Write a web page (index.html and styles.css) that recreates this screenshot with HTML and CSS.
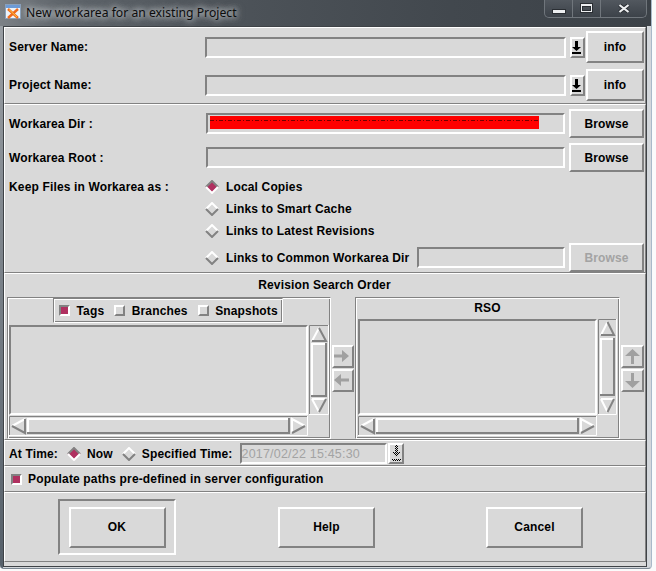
FILE: index.html
```html
<!DOCTYPE html>
<html>
<head>
<meta charset="utf-8">
<title>New workarea for an existing Project</title>
<link rel="stylesheet" href="styles.css">
</head>
<body>
<div class="win">
  <div class="titlebar">
    <svg class="appicon" width="16" height="16" viewBox="0 0 16 16">
      <rect x="0.5" y="0.5" width="15" height="14" fill="#eef3f8" stroke="#8aa0bb"/>
      <rect x="1" y="1" width="14" height="3" fill="#6d9bd6"/>
      <path d="M3 5 13 14M13 5 3 14" stroke="#f06a1c" stroke-width="2.5"/>
      <path d="M4 5.5 12 13" stroke="#ffc43a" stroke-width="1"/>
    </svg>
    <span class="title">New workarea for an existing Project</span>
    <div class="capbtns">
      <div class="cap cap-min"><span class="g-min"></span></div>
      <div class="cap cap-max"><span class="g-max"></span></div>
      <div class="cap cap-close">
        <svg class="g-close" width="12" height="9" viewBox="0 0 12 9">
          <path d="M1.5 1 10.5 8M10.5 1 1.5 8" stroke="#2a2e33" stroke-width="4"/>
          <path d="M1.5 1 10.5 8M10.5 1 1.5 8" stroke="#eceef0" stroke-width="2.2"/>
        </svg>
      </div>
    </div>
  </div>

  <div class="client">
    <!-- Section 1 -->
    <div class="sec s1">
      <div class="row">
        <span class="lbl">Server Name:</span>
        <div class="entry"></div>
        <div class="btn dd">
          <svg width="11" height="17" viewBox="0 0 11 17"><path d="M3 2H6V8H9L4.5 12 0 8H3ZM0 13H9V15H0Z" fill="#000"/></svg>
        </div>
        <div class="btn info">info</div>
      </div>
      <div class="row">
        <span class="lbl">Project Name:</span>
        <div class="entry"></div>
        <div class="btn dd">
          <svg width="11" height="17" viewBox="0 0 11 17"><path d="M3 2H6V8H9L4.5 12 0 8H3ZM0 13H9V15H0Z" fill="#000"/></svg>
        </div>
        <div class="btn info">info</div>
      </div>
    </div>

    <!-- Section 2 -->
    <div class="sec s2">
      <div class="row">
        <span class="lbl">Workarea Dir :</span>
        <div class="entry"><div class="redact"></div></div>
        <div class="btn browse">Browse</div>
      </div>
      <div class="row">
        <span class="lbl">Workarea Root :</span>
        <div class="entry"></div>
        <div class="btn browse">Browse</div>
      </div>
      <div class="keep">
        <span class="lbl">Keep Files in Workarea as :</span>
        <div class="radios">
          <div class="ritem">
            <svg class="dia" viewBox="0 0 14 14"><path d="M7 0.5 13.5 7 7 13.5 0.5 7Z" fill="#b03060"/><path d="M1 7 7 1 13 7" fill="none" stroke="#828282" stroke-width="2"/><path d="M1 7 7 13 13 7" fill="none" stroke="#fff" stroke-width="2"/></svg>
            <span>Local Copies</span>
          </div>
          <div class="ritem">
            <svg class="dia" viewBox="0 0 14 14"><path d="M7 0.5 13.5 7 7 13.5 0.5 7Z" fill="#d9d9d9"/><path d="M1 7 7 1 13 7" fill="none" stroke="#fff" stroke-width="2"/><path d="M1 7 7 13 13 7" fill="none" stroke="#828282" stroke-width="2"/></svg>
            <span>Links to Smart Cache</span>
          </div>
          <div class="ritem">
            <svg class="dia" viewBox="0 0 14 14"><path d="M7 0.5 13.5 7 7 13.5 0.5 7Z" fill="#d9d9d9"/><path d="M1 7 7 1 13 7" fill="none" stroke="#fff" stroke-width="2"/><path d="M1 7 7 13 13 7" fill="none" stroke="#828282" stroke-width="2"/></svg>
            <span>Links to Latest Revisions</span>
          </div>
          <div class="ritem last">
            <svg class="dia" viewBox="0 0 14 14"><path d="M7 0.5 13.5 7 7 13.5 0.5 7Z" fill="#d9d9d9"/><path d="M1 7 7 1 13 7" fill="none" stroke="#fff" stroke-width="2"/><path d="M1 7 7 13 13 7" fill="none" stroke="#828282" stroke-width="2"/></svg>
            <span>Links to Common Workarea Dir</span>
            <div class="entry common"></div>
            <div class="btn browse disabled">Browse</div>
          </div>
        </div>
      </div>
    </div>

    <!-- Section 3 -->
    <div class="sec s3">
      <div class="stitle">Revision Search Order</div>
      <div class="rso">
        <div class="grp lf">
          <div class="grp chkgrp">
            <span class="chk on"></span><span class="ctext">Tags</span>
            <span class="chk off sp"></span><span class="ctext">Branches</span>
            <span class="chk off sp"></span><span class="ctext">Snapshots</span>
          </div>
          <div class="listrow">
            <div class="list list1"></div>
            <svg class="sb vsb" width="20" height="90" viewBox="0 0 20 90">
              <path d="M0.5 90V0.5H20" fill="none" stroke="#828282"/>
              <path d="M0 89.5H19.5V0" fill="none" stroke="#fff"/>
              <path d="M3 16 10 3" stroke="#fff" stroke-width="2"/>
              <path d="M10 3 17 16H3" fill="none" stroke="#828282" stroke-width="2"/>
              <path d="M2 19H18M3 18V72" stroke="#fff" stroke-width="2"/>
              <path d="M2 71H18M17 18V72" stroke="#828282" stroke-width="2"/>
              <path d="M3 74H17M3 74 10 87" fill="none" stroke="#fff" stroke-width="2"/>
              <path d="M10 87 17 74" stroke="#828282" stroke-width="2"/>
            </svg>
          </div>
          <svg class="sb hsb" width="299" height="20" viewBox="0 0 299 20">
            <path d="M0.5 20V0.5H299" fill="none" stroke="#828282"/>
            <path d="M0 19.5H298.5V0" fill="none" stroke="#fff"/>
            <path d="M3 10 16 3" stroke="#fff" stroke-width="2"/>
            <path d="M16 3V17L3 10" fill="none" stroke="#828282" stroke-width="2"/>
            <path d="M18 3H281M19 2V18" stroke="#fff" stroke-width="2"/>
            <path d="M18 17H281M280 2V18" stroke="#828282" stroke-width="2"/>
            <path d="M283 17V3L296 10" fill="none" stroke="#fff" stroke-width="2"/>
            <path d="M296 10 283 17" stroke="#828282" stroke-width="2"/>
          </svg>
        </div>

        <div class="mid">
          <div class="btn abtn">
            <svg width="18" height="19" viewBox="0 0 18 19"><path d="M0 7.5H8V3L15 9 8 15V10.5H0Z" fill="#a0a0a0"/></svg>
          </div>
          <div class="btn abtn">
            <svg width="18" height="19" viewBox="0 0 18 19"><path d="M15 7.5H7V3L0 9 7 15V10.5H15Z" fill="#a0a0a0"/></svg>
          </div>
        </div>

        <div class="grp rf">
          <div class="rsot">RSO</div>
          <div class="listrow">
            <div class="list list2"></div>
            <svg class="sb vsb" width="19" height="96" viewBox="0 0 19 96">
              <path d="M0.5 96V0.5H19" fill="none" stroke="#828282"/>
              <path d="M0 95.5H18.5V0" fill="none" stroke="#fff"/>
              <path d="M3 16 9.5 3" stroke="#fff" stroke-width="2"/>
              <path d="M9.5 3 16 16H3" fill="none" stroke="#828282" stroke-width="2"/>
              <path d="M2 20H17M3 19V77" stroke="#fff" stroke-width="2"/>
              <path d="M2 76H17M16 19V77" stroke="#828282" stroke-width="2"/>
              <path d="M3 80H16M3 80 9.5 93" fill="none" stroke="#fff" stroke-width="2"/>
              <path d="M9.5 93 16 80" stroke="#828282" stroke-width="2"/>
            </svg>
          </div>
          <svg class="sb hsb" width="239" height="20" viewBox="0 0 239 20">
            <path d="M0.5 20V0.5H239" fill="none" stroke="#828282"/>
            <path d="M0 19.5H238.5V0" fill="none" stroke="#fff"/>
            <path d="M3 10 16 3" stroke="#fff" stroke-width="2"/>
            <path d="M16 3V17L3 10" fill="none" stroke="#828282" stroke-width="2"/>
            <path d="M18 3H221M19 2V18" stroke="#fff" stroke-width="2"/>
            <path d="M18 17H221M220 2V18" stroke="#828282" stroke-width="2"/>
            <path d="M223 17V3L236 10" fill="none" stroke="#fff" stroke-width="2"/>
            <path d="M236 10 223 17" stroke="#828282" stroke-width="2"/>
          </svg>
        </div>

        <div class="mid mid2">
          <div class="btn abtn abtn2">
            <svg width="19" height="19" viewBox="0 0 19 19"><path d="M8 17V9H2L9.5 2 17 9H11V17Z" fill="#a0a0a0"/></svg>
          </div>
          <div class="btn abtn abtn2">
            <svg width="19" height="19" viewBox="0 0 19 19"><path d="M8 2V10H2L9.5 17 17 10H11V2Z" fill="#a0a0a0"/></svg>
          </div>
        </div>
      </div>
    </div>

    <!-- Section 4 -->
    <div class="sec s4">
      <span class="lbl">At Time:</span>
      <svg class="dia t1" viewBox="0 0 14 14"><path d="M7 0.5 13.5 7 7 13.5 0.5 7Z" fill="#b03060"/><path d="M1 7 7 1 13 7" fill="none" stroke="#828282" stroke-width="2"/><path d="M1 7 7 13 13 7" fill="none" stroke="#fff" stroke-width="2"/></svg>
      <span>Now</span>
      <svg class="dia t2" viewBox="0 0 14 14"><path d="M7 0.5 13.5 7 7 13.5 0.5 7Z" fill="#d9d9d9"/><path d="M1 7 7 1 13 7" fill="none" stroke="#fff" stroke-width="2"/><path d="M1 7 7 13 13 7" fill="none" stroke="#828282" stroke-width="2"/></svg>
      <span>Specified Time:</span>
      <div class="entry tentry">2017/02/22 15:45:30</div>
      <div class="btn tbtn">
        <svg width="12" height="17" viewBox="0 0 12 17">
          <defs><pattern id="stip" width="2" height="2" patternUnits="userSpaceOnUse"><rect width="1" height="1" fill="#000"/><rect x="1" y="1" width="1" height="1" fill="#000"/></pattern></defs>
          <path d="M5 0H8V7H11L6.5 12 2 7H5ZM2 14H11V16H2Z" fill="url(#stip)"/>
        </svg>
      </div>
    </div>

    <!-- Section 5 -->
    <div class="sec s5">
      <span class="chk on"></span>
      <span>Populate paths pre-defined in server configuration</span>
    </div>

    <!-- Section 6 -->
    <div class="sec s6">
      <div class="ring"><div class="btn bb">OK</div></div>
      <div class="btn bb help">Help</div>
      <div class="btn bb cancel">Cancel</div>
    </div>
  </div>
</div>
</body>
</html>
```
FILE: styles.css
```css
* { box-sizing: border-box; }
html, body { margin: 0; padding: 0; }
body {
  width: 656px;
  height: 571px;
  overflow: hidden;
  background: #fbfbfb;
  font-family: "Liberation Sans", Arial, sans-serif;
  font-size: 12px;
  font-weight: bold;
  color: #000;
  white-space: nowrap;
}

/* window frame */
.win {
  width: 652px;
  height: 569px;
  background: linear-gradient(#9ca1a6, #56606a) 0 0 / 3px 100% no-repeat, #d3d7db;
  border-right: 1px solid #a9b9c9;
  border-bottom: 1px solid #7d8893;
  border-radius: 0 0 4px 4px;
  overflow: hidden;
}
.titlebar {
  height: 26px;
  display: flex;
  align-items: flex-start;
  padding-left: 5px;
  background: linear-gradient(to right, #7c8186 0, #60666c 60px, #4c5258 250px, #42484e 450px, #3c4248 100%);
}
.appicon { flex: none; margin-top: 4px; }
.title {
  margin-left: 5px;
  margin-top: 4px;
  font: 400 12.2px/17px "Noto Sans", "Open Sans", sans-serif;
  color: #0c0c0c;
  text-shadow: 0 0 6px #c4c8cc, 0 0 6px #c4c8cc, 0 0 10px rgba(200, 204, 208, 0.6);
}
.capbtns {
  margin-left: auto;
  margin-right: 4px;
  display: flex;
  height: 18px;
  border: 1px solid #70767c;
  border-top: 0;
  border-radius: 0 0 5px 5px;
  background: linear-gradient(#52585f, #3c4249);
  overflow: hidden;
}
.cap { display: flex; justify-content: center; align-items: flex-start; width: 27px; height: 17px; }
.cap + .cap { border-left: 1px solid #70767c; }
.cap-max { width: 28px; }
.cap-close { width: 46px; }
.g-min {
  margin-top: 10px;
  width: 12px;
  height: 3px;
  background: #eceef0;
  box-shadow: 0 0 0 1px #2a2e33;
}
.g-max {
  margin-top: 4px;
  width: 11px;
  height: 8px;
  border: 1px solid #eceef0;
  border-top-width: 2px;
  box-shadow: 0 0 0 1px #2a2e33, inset 0 0 0 1px #2a2e33;
}
.g-close { margin-top: 4px; }

/* client area */
.client {
  margin-left: 3px;
  width: 644px;
  height: 541px;
  border: 1px solid #3f4347;
  background: #d9d9d9;
  letter-spacing: 0.15px;
}
.sec {
  border: 1px solid;
  border-color: #fff #828282 #828282 #fff;
}
.row { display: flex; align-items: center; }
.lbl { flex: none; }

.entry {
  flex: none;
  height: 21px;
  border: 2px solid;
  border-color: #828282 #fff #fff #828282;
  background: #d9d9d9;
}
.btn {
  flex: none;
  display: flex;
  align-items: center;
  justify-content: center;
  border: 2px solid;
  border-color: #fff #828282 #828282 #fff;
  background: #d9d9d9;
}

/* section 1 */
.s1 { height: 77px; padding: 3px 1px 0 4px; }
.s1 .row { height: 32px; }
.s1 .row + .row { margin-top: 6px; }
.s1 .lbl { width: 196px; }
.s1 .entry { width: 361px; }
.dd { margin-left: 4px; width: 15px; height: 21px; }
.info { margin-left: 1px; width: 58px; height: 32px; }

/* section 2 */
.s2 { height: 169px; padding: 4px 1px 0 4px; }
.s2 .row { height: 29px; }
.s2 .row + .row { margin-top: 5px; }
.s2 .row .lbl { width: 197px; }
.s2 .row .entry { width: 359px; }
.browse { margin-left: 4px; width: 75px; height: 29px; }
.disabled { color: #a3a3a3; }
.redact {
  margin: 1px 0 0 2px;
  width: 329px;
  height: 13px;
  background: repeating-linear-gradient(to right, rgba(70, 0, 0, 0.75) 0 4px, transparent 4px 6px, rgba(70, 0, 0, 0.75) 6px 7px, transparent 7px 9px) 0 4px / 100% 1px no-repeat, #ff0000;
}
.keep { display: flex; margin-top: 4px; }
.keep .lbl { width: 196px; line-height: 22px; }
.radios { display: flex; flex-direction: column; width: 439px; }
.ritem { display: flex; align-items: center; height: 22px; }
.ritem.last { height: 29px; margin-top: 1px; }
.dia { flex: none; width: 14px; height: 14px; margin-right: 7px; display: block; }
.common { margin-left: auto; width: 148px; }

/* section 3 */
.s3 { height: 167px; padding-right: 1px; }
.stitle { height: 23px; line-height: 23px; text-align: center; }
.rso { display: flex; height: 142px; padding-left: 2px; }
.grp {
  border: 1px solid;
  border-color: #828282 #fff #fff #828282;
  box-shadow: inset 1px 1px 0 #fff, inset -1px -1px 0 #828282;
}
.lf {
  flex: none;
  width: 324px;
  height: 142px;
  padding-left: 1px;
  display: flex;
  flex-direction: column;
}
.chkgrp {
  margin-left: 44px;
  width: 230px;
  height: 25px;
  display: flex;
  align-items: center;
  padding-left: 5px;
}
.chk {
  flex: none;
  display: block;
  width: 11px;
  height: 11px;
  border: 2px solid;
}
.chk.on { border-color: #828282 #fff #fff #828282; background: #b03060; }
.chk.off { border-color: #fff #828282 #828282 #fff; background: #d9d9d9; }
.ctext { margin-left: 6.5px; }
.chk.sp { margin-left: 10px; }
.listrow { display: flex; margin-top: 2px; }
.list {
  flex: none;
  border: 2px solid;
  border-color: #828282 #fff #fff #828282;
}
.list1 { width: 299px; height: 90px; }
.list2 { width: 239px; height: 96px; }
.sb { display: block; flex: none; }
.vsb { margin-left: 1px; }
.hsb { margin-top: 1px; }
.mid {
  flex: none;
  margin-left: 1px;
  width: 22px;
  display: flex;
  flex-direction: column;
  justify-content: center;
  gap: 1px;
}
.abtn { width: 22px; height: 23px; }
.mid2 { width: 23px; }
.abtn2 { width: 23px; }
.rf {
  flex: none;
  margin-left: 1px;
  width: 265px;
  height: 142px;
  padding-left: 2px;
  display: flex;
  flex-direction: column;
}
.rsot { height: 21px; line-height: 21px; text-align: center; margin-left: -2px; }
.rf .listrow { margin-top: 0; }

/* section 4 */
.s4 {
  height: 26px;
  padding: 1px 1px 0 4px;
  display: flex;
  align-items: center;
}
.s4 .dia { margin-right: 6px; margin-left: 9px; }
.tentry {
  display: flex;
  align-items: center;
  margin-left: 7px;
  width: 147px;
  font-weight: 400;
  font-size: 12.5px;
  letter-spacing: 0.2px;
  color: #a3a3a3;
}
.tbtn { margin-left: 1px; width: 16px; height: 21px; }

/* section 5 */
.s5 {
  height: 26px;
  padding-left: 6px;
  display: flex;
  align-items: center;
}
.s5 .chk { margin-right: 6px; }

/* section 6 */
.s6 {
  height: 70px;
  display: flex;
  align-items: center;
  padding-left: 53px;
}
.ring {
  flex: none;
  width: 118px;
  height: 56px;
  border: 2px solid;
  border-color: #828282 #fff #fff #828282;
  display: flex;
  align-items: center;
  justify-content: center;
}
.bb { width: 97px; height: 41px; }
.help { margin-left: 102px; }
.cancel { margin-left: 111px; }
```
